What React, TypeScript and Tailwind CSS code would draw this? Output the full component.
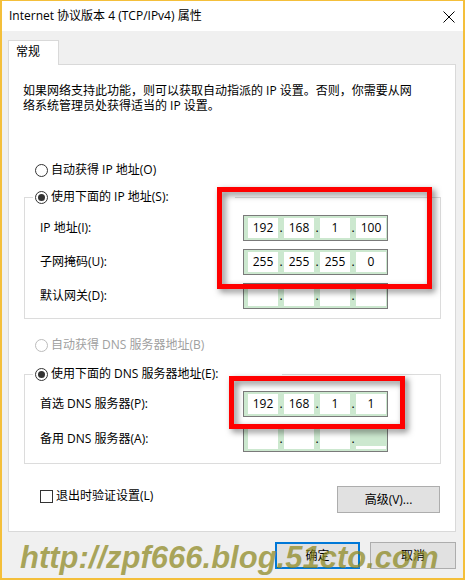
import React from 'react';

const FONT = "font-['Open_Sans','Noto_Sans_CJK_SC',sans-serif]";

const Radio: React.FC<{ checked?: boolean; disabled?: boolean }> = ({ checked, disabled }) => (
  <span
    className={`flex h-[13px] w-[13px] shrink-0 items-center justify-center rounded-full border bg-white ${
      disabled ? 'border-[#bcbcbc]' : 'border-[#333333]'
    }`}
  >
    {checked && <span className="h-[7px] w-[7px] rounded-full bg-[#333333]" />}
  </span>
);

const Cell: React.FC<{ value?: string; covered?: boolean }> = ({ value, covered }) =>
  covered ? (
    <div className="flex w-[30px] flex-col justify-end">
      <div className="h-[3px] bg-white" />
    </div>
  ) : (
    <div className="flex w-[30px] items-center justify-center bg-white text-[12px] leading-[20px]">{value}</div>
  );

const Dot = () => (
  <div className="flex w-[6px] items-center justify-center text-[12px] leading-[20px]">.</div>
);

const IpBox: React.FC<{ values?: string[]; lastCovered?: boolean }> = ({ values = ['', '', '', ''], lastCovered }) => (
  <div className="flex h-[26px] w-[145px] border border-[#7a7a7a] bg-[#cce8cf] py-[2px] pl-[4px] pr-[1px]">
    <Cell value={values[0]} />
    <Dot />
    <Cell value={values[1]} />
    <Dot />
    <Cell value={values[2]} />
    <Dot />
    <Cell value={values[3]} covered={lastCovered} />
  </div>
);

const Row: React.FC<{ label: string; children: React.ReactNode }> = ({ label, children }) => (
  <div className="flex h-[26px] items-center">
    <span className="w-[203px] text-[12px] leading-[16px]">{label}</span>
    {children}
  </div>
);

export default function App() {
  return (
    <div className={`${FONT} relative flex h-[580px] w-[465px] flex-col border-b-2 border-l-2 border-r-2 border-t border-[#f4bf3a] bg-[#f0f0f0] text-black`}>
      {/* title bar */}
      <div className="flex h-[30px] items-center justify-between bg-white pl-[7px] pr-[8px]">
        <span className="text-[12px] leading-[16px]">Internet 协议版本 4 (TCP/IPv4) 属性</span>
        <svg width="12" height="12" viewBox="0 0 12 12" className="mt-[1px]">
          <path d="M0.5 0.5 L11.5 11.5 M11.5 0.5 L0.5 11.5" stroke="#000" strokeWidth="1" fill="none" />
        </svg>
      </div>

      <div className="flex flex-col pl-[6px] pr-[7px] pt-[9px]">
        {/* tab */}
        <div className="relative z-10 -mb-px flex h-[25px] w-[51px] border-l border-r border-t border-[#d9d9d9] bg-white pl-[7px] pt-[3px] text-[12px] leading-[15px]">
          常规
        </div>

        {/* panel */}
        <div className="flex flex-col border border-[#d9d9d9] bg-white pb-[18px]">
          <p className="pl-[14px] pt-[18px] text-[12px] leading-[15px]">
            如果网络支持此功能，则可以获取自动指派的 IP 设置。否则，你需要从网
            <br />
            络系统管理员处获得适当的 IP 设置。
          </p>

          <div className="ml-[26px] mt-[49px] flex h-[16px] items-center gap-[3px] text-[12px] leading-[16px]">
            <Radio />
            <span>自动获得 IP 地址(O)</span>
          </div>

          <fieldset className="ml-[15px] mt-[11px] w-[417px] border border-[#dcdcdc] pb-[9px] pl-[15px]">
            <legend className="-ml-[7px] flex h-[16px] w-[202px] items-center gap-[3px] pl-[2px] text-[12px] leading-[16px]">
              <Radio checked />
              <span>使用下面的 IP 地址(S):</span>
            </legend>
            <div className="mt-[10px] flex flex-col gap-[8px]">
              <Row label="IP 地址(I):">
                <IpBox values={['192', '168', '1', '100']} />
              </Row>
              <Row label="子网掩码(U):">
                <IpBox values={['255', '255', '255', '0']} />
              </Row>
              <Row label="默认网关(D):">
                <IpBox />
              </Row>
            </div>
          </fieldset>

          <div className="ml-[26px] mt-[18px] flex h-[16px] items-center gap-[3px] text-[12px] leading-[16px] text-[#a0a0a0]">
            <Radio disabled />
            <span>自动获得 DNS 服务器地址(B)</span>
          </div>

          <fieldset className="ml-[15px] mt-[13px] w-[417px] border border-[#dcdcdc] pb-[11px] pl-[15px]">
            <legend className="-ml-[7px] flex h-[16px] w-[249px] items-center gap-[3px] pl-[2px] text-[12px] leading-[16px]">
              <Radio checked />
              <span>使用下面的 DNS 服务器地址(E):</span>
            </legend>
            <div className="mt-[9px] flex flex-col gap-[9px]">
              <Row label="首选 DNS 服务器(P):">
                <IpBox values={['192', '168', '1', '1']} />
              </Row>
              <Row label="备用 DNS 服务器(A):">
                <IpBox lastCovered />
              </Row>
            </div>
          </fieldset>

          <div className="mt-[22px] flex items-start justify-between pl-[31px] pr-[15px]">
            <div className="mt-[2px] flex items-center gap-[3px] text-[12px] leading-[16px]">
              <span className="h-[13px] w-[13px] border border-[#333333] bg-white" />
              <span>退出时验证设置(L)</span>
            </div>
            <button className="h-[27px] w-[103px] border border-[#adadad] bg-[#e1e1e1] text-[12px] leading-[16px]">
              高级(V)...
            </button>
          </div>
        </div>

        {/* footer buttons */}
        <div className="mt-[10px] flex justify-end gap-[10px]">
          <button className="h-[27px] w-[85px] border-2 border-[#0078d7] bg-[#e1e1e1] text-[12px] leading-[16px]">
            确定
          </button>
          <button className="h-[27px] w-[86px] border border-[#adadad] bg-[#e1e1e1] text-[12px] leading-[16px]">
            取消
          </button>
        </div>
      </div>

      {/* annotations */}
      <div className="pointer-events-none absolute left-[215px] top-[186px] h-[102px] w-[215px] border-[5px] border-[#ff0000] drop-shadow-[3px_3px_3px_rgba(0,0,0,0.5)]" />
      <div className="pointer-events-none absolute left-[227px] top-[375px] h-[53px] w-[176px] border-[5px] border-[#ff0000] drop-shadow-[3px_3px_3px_rgba(0,0,0,0.5)]" />

      <div className="pointer-events-none absolute left-[18px] top-[541px] font-['Liberation_Sans',sans-serif] text-[31px] font-bold italic leading-none text-[rgba(140,135,30,0.72)]">
        http://zpf666.blog.51cto.com
      </div>
    </div>
  );
}
